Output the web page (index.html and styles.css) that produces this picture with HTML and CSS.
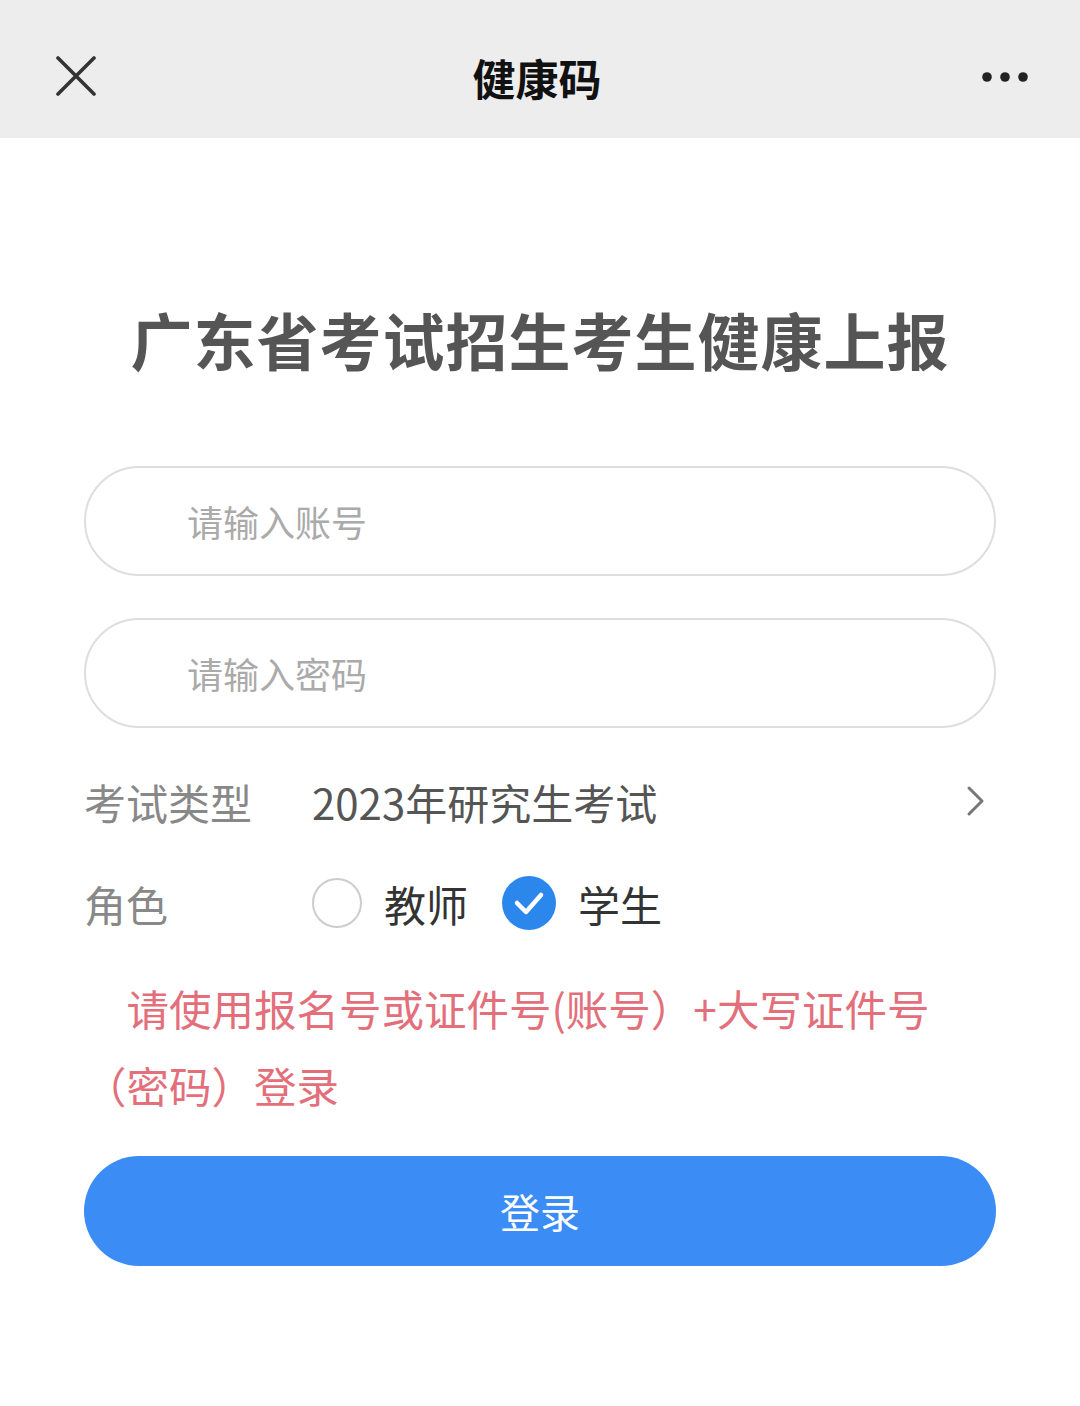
FILE: index.html
```html
<!DOCTYPE html>
<html lang="zh-CN">

<head>
    <meta charset="UTF-8">
    <meta name="viewport" content="width=device-width, initial-scale=1.0">
    <title>健康码</title>
    <link rel="stylesheet" href="styles.css">
</head>

<body>
    <header class="topbar">
        <svg class="close-icon" viewBox="0 0 40 40" width="40" height="40">
            <path d="M2 2 L38 38 M38 2 L2 38" stroke="#333" stroke-width="3.6" stroke-linecap="round" fill="none" />
        </svg>
        <div class="topbar-title">健康码</div>
        <svg class="more-icon" viewBox="0 0 46 12" width="46" height="12">
            <circle cx="5" cy="6" r="4.8" fill="#222" />
            <circle cx="23" cy="6" r="4.8" fill="#222" />
            <circle cx="41" cy="6" r="4.8" fill="#222" />
        </svg>
    </header>

    <main class="content">
        <h1 class="page-title">广东省考试招生考生健康上报</h1>

        <form class="login-form">
            <input type="text" class="field" placeholder="请输入账号">
            <input type="password" class="field" placeholder="请输入密码">

            <div class="form-row">
                <span class="row-label">考试类型</span>
                <span class="row-value">2023年研究生考试</span>
                <svg class="chevron" viewBox="0 0 20 32" width="20" height="32">
                    <path d="M3 3 L16 16 L3 29" stroke="#777" stroke-width="3" stroke-linecap="round" stroke-linejoin="round" fill="none" />
                </svg>
            </div>

            <div class="form-row">
                <span class="row-label">角色</span>
                <div class="role-group">
                    <label class="role-option">
                        <span class="radio"></span>
                        <span>教师</span>
                    </label>
                    <label class="role-option">
                        <span class="radio checked">
                            <svg viewBox="0 0 54 54" width="54" height="54">
                                <path d="M15 27 L24 36 L39 19" stroke="#fff" stroke-width="4.5" stroke-linecap="round" stroke-linejoin="round" fill="none" />
                            </svg>
                        </span>
                        <span>学生</span>
                    </label>
                </div>
            </div>

            <p class="hint">请使用报名号或证件号(账号）+大写证件号（密码）登录</p>

            <button type="button" class="login-btn">登录</button>
        </form>
    </main>
</body>

</html>
```

FILE: styles.css
```css
body {
    margin: 0;
    font-family: "Noto Sans CJK SC", "Noto Sans", sans-serif;
    background-color: #fff;
    color: #333;
}

.topbar {
    height: 138px;
    background-color: #ededed;
    display: grid;
    grid-template-columns: 1fr auto 1fr;
    align-items: center;
    padding: 16px 52px 0 56px;
    box-sizing: border-box;
}

.close-icon {
    display: block;
    margin-top: -2px;
}

.topbar-title {
    font-size: 43px;
    font-weight: bold;
    color: #111;
    margin-left: -10px;
}

.more-icon {
    display: block;
    justify-self: end;
}

.content {
    padding: 0 84px;
}

.page-title {
    margin: 164px 0 90px;
    font-size: 62px;
    line-height: 74px;
    font-weight: bold;
    color: #555;
    text-align: center;
    letter-spacing: 1px;
}

.login-form {
    display: flex;
    flex-direction: column;
}

.field {
    height: 110px;
    border: 2px solid #dedede;
    border-radius: 55px;
    padding: 0 0 0 101px;
    margin: 0 0 42px;
    font-family: inherit;
    font-size: 36px;
    color: #333;
    box-sizing: border-box;
    outline: none;
}

.field:last-of-type {
    margin-bottom: 33px;
}

.field::placeholder {
    color: #aaa;
}

.form-row {
    display: flex;
    align-items: center;
    height: 80px;
    margin-bottom: 22px;
}

.row-label {
    width: 228px;
    font-size: 42px;
    color: #888;
    flex-shrink: 0;
}

.row-value {
    flex: 1;
    font-size: 42px;
    color: #555;
}

.chevron {
    display: block;
    margin-right: 10px;
}

.role-group {
    display: flex;
    align-items: center;
    gap: 34px;
}

.role-option {
    display: flex;
    align-items: center;
    gap: 22px;
    font-size: 42px;
    color: #333;
}

.radio {
    width: 50px;
    height: 50px;
    border: 2px solid #ccc;
    border-radius: 50%;
    box-sizing: border-box;
    display: flex;
    align-items: center;
    justify-content: center;
}

.radio.checked {
    width: 54px;
    height: 54px;
    border: none;
    background-color: #2b87ec;
}

.radio svg {
    display: block;
}

.hint {
    margin: 4px 0 33px;
    font-size: 42.5px;
    line-height: 77px;
    color: #e36f7b;
    text-indent: 1em;
}

.login-btn {
    height: 110px;
    border: none;
    border-radius: 55px;
    background-color: #3b8cf4;
    color: #fff;
    font-family: inherit;
    font-size: 40px;
    cursor: pointer;
}
```
